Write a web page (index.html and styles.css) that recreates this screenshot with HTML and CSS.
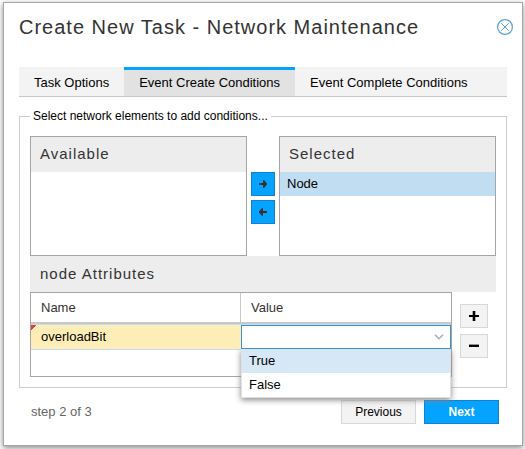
FILE: index.html
```html
<!DOCTYPE html>
<html lang="en">
<head>
<meta charset="UTF-8">
<meta name="viewport" content="width=device-width, initial-scale=1.0">
<title>Create New Task - Network Maintenance</title>
<link rel="stylesheet" href="styles.css">
</head>
<body>

<div class="dialog" role="dialog" aria-labelledby="dialogTitle">
    <div class="dialogHeader">
        <h1 id="dialogTitle">Create New Task - Network Maintenance</h1>
        <button type="button" class="closeButton" aria-label="Close">
            <svg width="16" height="16" viewBox="0 0 16 16" fill="none" stroke="#5b9fd3">
                <circle cx="8" cy="8" r="7.4" stroke-width="1.2"/>
                <path d="M4.3 4.3l7.4 7.4M11.7 4.3l-7.4 7.4"/>
            </svg>
        </button>
    </div>

    <div class="tabs" role="tablist">
        <button type="button" class="tab" role="tab">Task Options</button>
        <button type="button" class="tab active" role="tab" aria-selected="true">Event Create Conditions</button>
        <button type="button" class="tab" role="tab">Event Complete Conditions</button>
    </div>

    <fieldset class="conditions">
        <legend>Select network elements to add conditions...</legend>

        <div class="picker">
            <div class="listBox">
                <h2 class="panelTitle">Available</h2>
                <ul class="items"></ul>
            </div>
            <div class="moveButtons">
                <button type="button" class="moveButton" aria-label="Add">
                    <svg width="8" height="8" viewBox="0 0 8 8" fill="#333"><path d="M0 3h4V0h1l3 3.5v1L5 8H4V5H0z"/></svg>
                </button>
                <button type="button" class="moveButton" aria-label="Remove">
                    <svg width="8" height="8" viewBox="0 0 8 8" fill="#333"><path d="M8 3H4V0H3L0 3.5v1L3 8h1V5h4z"/></svg>
                </button>
            </div>
            <div class="listBox">
                <h2 class="panelTitle">Selected</h2>
                <ul class="items">
                    <li class="item selected">Node</li>
                </ul>
            </div>
        </div>

        <h2 class="panelTitle gridTitle">node Attributes</h2>

        <div class="attributes">
            <div class="grid">
                <table>
                    <thead>
                        <tr><th>Name</th><th id="valueHeader">Value</th></tr>
                    </thead>
                    <tbody>
                        <tr>
                            <td class="nameCell">overloadBit</td>
                            <td class="valueCell">
                                <div class="combo">
                                    <select class="comboSelect" aria-labelledby="valueHeader">
                                        <option value="" selected></option>
                                        <option>True</option>
                                        <option>False</option>
                                    </select>
                                    <svg class="chevron" width="10" height="6" viewBox="0 0 10 6" fill="none" stroke="#aaa" stroke-width="1.4"><path d="M1 .7l4 4 4-4"/></svg>
                                    <ul class="comboMenu" role="listbox">
                                        <li class="item over" role="option">True</li>
                                        <li class="item" role="option">False</li>
                                    </ul>
                                </div>
                            </td>
                        </tr>
                    </tbody>
                </table>
            </div>
            <div class="rowButtons">
                <button type="button" class="button rowButton" aria-label="Add row">
                    <svg width="10" height="10" viewBox="0 0 10 10" fill="#000"><path d="M3.7 0h2.6v4H10v2H6.3v4H3.7V6H0V4h3.7z"/></svg>
                </button>
                <button type="button" class="button rowButton" aria-label="Remove row">
                    <svg width="10" height="10" viewBox="0 0 10 10" fill="#000"><path d="M0 3.6h10V6H0z"/></svg>
                </button>
            </div>
        </div>
    </fieldset>

    <div class="footer">
        <span class="step">step 2 of 3</span>
        <button type="button" class="button">Previous</button>
        <button type="button" class="button primary">Next</button>
    </div>
</div>

</body>
</html>
```

FILE: styles.css
```css
* {
    box-sizing: border-box;
}

body {
    margin: 0;
    padding: 2px 2px 3px 3px;
    background-color: #fff;
    font-family: "Liberation Sans", Arial, sans-serif;
    font-size: 13px;
    line-height: 16px;
    color: #000;
}

button,
select {
    font: inherit;
    color: inherit;
    margin: 0;
    padding: 0;
    border: 0;
    border-radius: 0;
}

ul {
    list-style: none;
    margin: 0;
    padding: 0;
}

svg {
    display: block;
}

.dialog {
    padding: 0 15px 21px;
    background-color: #fff;
    border: 1px solid #a5a5a5;
    box-shadow: 0 2px 6px #888;
}

.dialogHeader {
    display: flex;
    justify-content: space-between;
    align-items: center;
    height: 48px;
    margin: 0 -6px 16px 0;
}

.dialogHeader h1 {
    margin: 0;
    font-size: 20px;
    line-height: 24px;
    font-weight: normal;
    letter-spacing: 1px;
    color: #333;
}

.closeButton {
    background: none;
    cursor: pointer;
}

/* tabs */

.tabs {
    display: flex;
    background-color: #f3f3f3;
    border-bottom: 1px solid #c8c8c8;
}

.tab {
    height: 29px;
    padding: 0 15px;
    background: none;
    border-top: 3px solid transparent;
    cursor: pointer;
}

.tab.active {
    background-color: #e2e2e2;
    border-top-color: #04a3ff;
}

/* conditions */

.conditions {
    min-width: 0;
    margin: 11px 0 0;
    padding: 12px 10px 10px;
    border: 1px solid #ccc;
}

.conditions legend {
    padding: 0 3px;
    font-size: 12px;
}

.picker {
    display: flex;
    gap: 4px;
}

.listBox {
    flex: 1;
    min-height: 120px;
    border: 1px solid #a5a5a5;
}

.panelTitle {
    margin: 0;
    padding: 7px 9px 9px;
    background-color: #ededed;
    font-size: 15px;
    line-height: 19px;
    font-weight: normal;
    letter-spacing: 1px;
    color: #333;
}

.gridTitle {
    padding: 8px 10px 9px;
}

.item {
    padding: 4px 7px;
}

.item.selected {
    background-color: #c1ddf1;
}

.item.over {
    background-color: #d6e8f6;
}

.moveButtons {
    display: flex;
    flex-direction: column;
    gap: 4px;
    padding-top: 36px;
}

.moveButton {
    display: flex;
    justify-content: center;
    align-items: center;
    width: 24px;
    height: 24px;
    background-color: #04a3ff;
    border: 1px solid #157fcc;
    cursor: pointer;
}

/* attributes grid */

.attributes {
    display: flex;
    gap: 8px;
    padding-right: 8px;
}

.grid {
    flex: 1;
    min-height: 85px;
    border: 1px solid #a5a5a5;
}

.grid table {
    width: 100%;
    table-layout: fixed;
    border-spacing: 0;
}

.grid th {
    height: 31px;
    padding: 0 10px;
    border-bottom: 2px solid #c8c8c8;
    text-align: left;
    font-weight: normal;
    color: #333;
}

.grid th:first-child {
    border-right: 1px solid #c8c8c8;
}

.grid td {
    padding: 0;
    border-top: 1px solid #c1ddf1;
    border-bottom: 1px solid #c1ddf1;
}

.grid .nameCell {
    padding: 0 10px;
    background: linear-gradient(135deg, #e0442e 4px, transparent 4px) #ffedb8;
}

.combo {
    position: relative;
}

.comboSelect {
    display: block;
    width: 100%;
    height: 24px;
    padding: 0 24px 0 7px;
    appearance: none;
    background-color: #fff;
    border: 1px solid #3892d4;
}

.chevron {
    position: absolute;
    top: 9px;
    right: 7px;
    pointer-events: none;
}

.comboMenu {
    position: absolute;
    top: 100%;
    left: 0;
    right: 0;
    background-color: #fff;
    border: solid #e1e1e1;
    border-width: 0 1px 1px;
    box-shadow: 0 2px 6px #888;
    clip-path: inset(0 -10px -10px);
}

.rowButtons {
    display: flex;
    flex-direction: column;
    gap: 6px;
    padding-top: 12px;
}

/* buttons */

.button {
    display: flex;
    justify-content: center;
    align-items: center;
    width: 75px;
    height: 24px;
    background-color: #f3f3f3;
    border: 1px solid #d8d8d8;
    font-size: 12px;
    cursor: pointer;
}

.rowButton {
    width: 28px;
}

.button.primary {
    background-color: #04a3ff;
    border-color: #157fcc;
    font-weight: bold;
    color: #fff;
}

.footer {
    display: flex;
    align-items: center;
    gap: 8px;
    margin-top: 12px;
    padding: 0 8px 0 12px;
}

.step {
    flex: 1;
    color: #666;
}
```
